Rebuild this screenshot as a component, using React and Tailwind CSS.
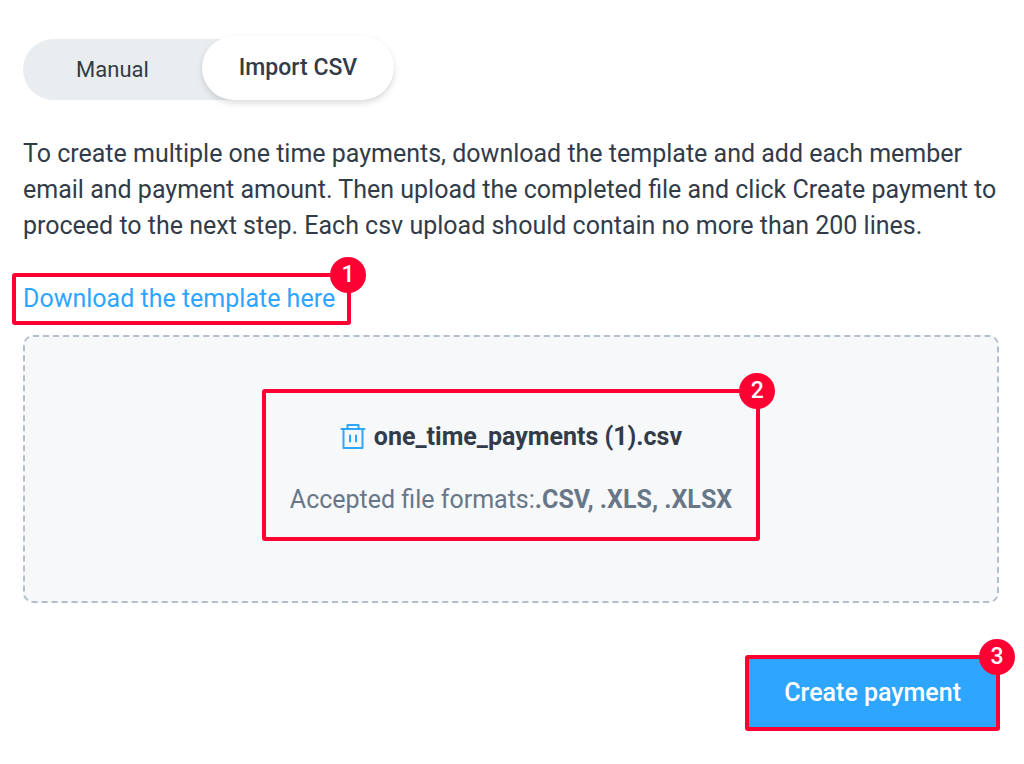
import React from 'react';

// Numbered red outline used to point at a step
const Step = ({ number, className = '', children }) => (
  <div className={`relative border-4 border-[#ff0033] rounded-[3px] ${className}`}>
    {children}
    <span className="absolute -top-5 -right-[19px] w-9 h-9 rounded-full bg-[#ff0033] text-white text-[23px] leading-9 font-medium text-center">
      {number}
    </span>
  </div>
);

const TrashIcon = () => (
  <svg
    width="26"
    height="28"
    viewBox="0 0 26 28"
    fill="none"
    stroke="#2ea6ff"
    strokeWidth="2"
    strokeLinecap="round"
    strokeLinejoin="round"
    aria-hidden="true"
  >
    <path d="M1.5 6h23" />
    <path d="M7.5 6V2h11v4" />
    <path d="M3.5 6v19h19V6" />
    <path d="M10 12.5v6M16 12.5v6" />
  </svg>
);

const Tabs = () => (
  <div className="flex">
    <div role="tablist" className="flex items-end h-[61px] rounded-full bg-[#e9edf0]">
      <button type="button" role="tab" aria-selected="false" className="w-[179px] h-[61px] text-[22px]">
        Manual
      </button>
      <button
        type="button"
        role="tab"
        aria-selected="true"
        className="w-[192px] h-16 rounded-full bg-white text-[23px] font-medium shadow-[0_3px_6px_rgba(0,0,0,0.14)]"
      >
        Import CSV
      </button>
    </div>
  </div>
);

const App = () => (
  <main className="pl-[23px] pr-[25px] pt-[39px] pb-8 bg-white text-[#323c49] font-['Roboto',sans-serif]">
    <Tabs />

    <p className="mt-9 text-[25px] leading-9">
      To create multiple one time payments, download the template and add each member email and
      payment amount. Then upload the completed file and click Create payment to proceed to the
      next step. Each csv upload should contain no more than 200 lines.
    </p>

    <div className="flex mt-[29px] -ml-[11px]">
      <Step number={1} className="pl-[7px] pr-3 py-1">
        <a href="#template" className="block text-[25px] leading-9 text-[#2ea6ff]">
          Download the template here
        </a>
      </Step>
    </div>

    <section className="flex items-center justify-center mt-2.5 h-[268px] rounded-[10px] border-2 border-dashed border-[#b3bfce] bg-[#f7f8fa]">
      <Step number={2} className="flex flex-col items-center gap-[27px] px-6 pt-[26px] pb-[19px] mt-[-8px]">
        <div className="flex items-center gap-2">
          <button type="button" aria-label="Remove file">
            <TrashIcon />
          </button>
          <span className="text-[25px] leading-9 font-bold">one_time_payments (1).csv</span>
        </div>
        <p className="text-[25px] leading-9 text-[#677788]">
          Accepted file formats:<strong className="font-bold">.CSV, .XLS, .XLSX</strong>
        </p>
      </Step>
    </section>

    <div className="flex justify-end mt-[52px] -mr-px">
      <Step number={3}>
        <button type="button" className="block px-[35px] py-4 bg-[#2ea6ff] text-white text-[25px] leading-9 font-medium">
          Create payment
        </button>
      </Step>
    </div>
  </main>
);

export default App;
